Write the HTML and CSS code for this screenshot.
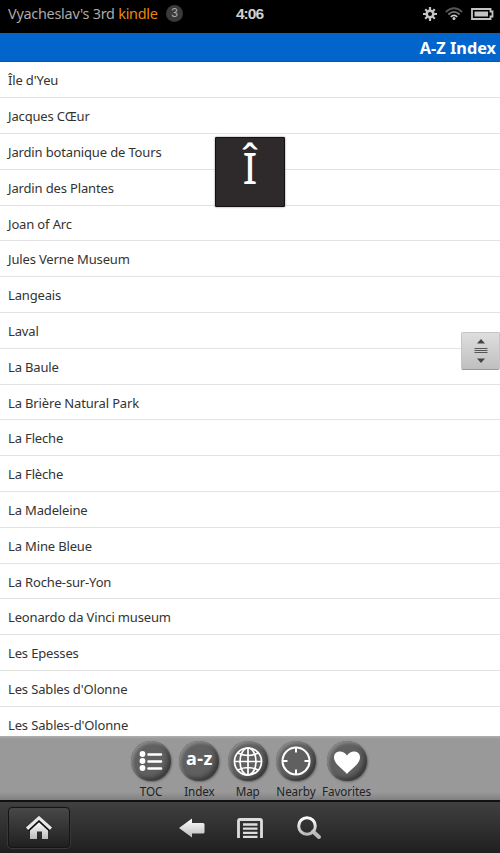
FILE: index.html
```
<!DOCTYPE html>
<html lang="en">
<head>
  <meta charset="UTF-8">
  <meta name="viewport" content="width=device-width, initial-scale=1.0">
  <title>A-Z Index</title>
  <link rel="stylesheet" href="styles.css">
</head>
<body>
  <div class="status-bar">
    <div class="device">Vyacheslav's 3rd <span class="brand">kindle</span></div>
    <div class="badge">3</div>
    <div class="clock">4:06</div>
    <div class="status-icons">
      <svg width="14" height="14" viewBox="0 0 14 14">
        <g stroke="#c4c4c4" stroke-width="2.2">
          <path d="M7 0v14M0 7h14M2.2 2.2l9.6 9.6M11.8 2.2l-9.6 9.6"/>
        </g>
        <circle cx="7" cy="7" r="3.3" fill="#000" stroke="#c4c4c4" stroke-width="2.6"/>
      </svg>
      <svg width="18" height="14" viewBox="0 0 18 14" fill="none" stroke-width="1.8">
        <path d="M.8 5Q9-2.4 17.2 5" stroke="#555"/>
        <path d="M3.4 7.5Q9 2.2 14.6 7.5" stroke="#777"/>
        <path d="M5.8 9.9Q9 6.7 12.2 9.9" stroke="#ccc"/>
        <circle cx="9" cy="11.6" r="1.5" fill="#ccc"/>
      </svg>
      <svg width="23" height="12" viewBox="0 0 23 12">
        <path d="M1 1h18.500v2.500h2v5h-2V11H1z" fill="none" stroke="#c4c4c4" stroke-width="1.8"/>
        <path d="M3.500 3.500h13.500v5H3.500z" fill="#c4c4c4"/>
      </svg>
    </div>
  </div>

  <div class="title-bar">A-Z Index</div>

  <div class="list-area">
    <ul class="list">
      <li>Île d'Yeu</li>
      <li>Jacques CŒur</li>
      <li>Jardin botanique de Tours</li>
      <li>Jardin des Plantes</li>
      <li>Joan of Arc</li>
      <li>Jules Verne Museum</li>
      <li>Langeais</li>
      <li>Laval</li>
      <li>La Baule</li>
      <li>La Brière Natural Park</li>
      <li>La Fleche</li>
      <li>La Flèche</li>
      <li>La Madeleine</li>
      <li>La Mine Bleue</li>
      <li>La Roche-sur-Yon</li>
      <li>Leonardo da Vinci museum</li>
      <li>Les Epesses</li>
      <li>Les Sables d'Olonne</li>
      <li>Les Sables-d'Olonne</li>
    </ul>
    <div class="letter">Î</div>
    <div class="scroll-thumb">
      <svg width="14" height="26" viewBox="0 0 14 26">
        <path d="M3 5.500L7 1l4 4.500z M3 20.500h8L7 25z" fill="#444"/>
        <path d="M.5 10.500h13M.5 12.500h13M.5 14.500h13" stroke="#555"/>
      </svg>
    </div>
  </div>

  <div class="tab-bar">
    <div class="tab">
      <div class="disc">
        <svg width="40" height="40" viewBox="0 0 40 40">
          <g fill="#fff"><circle cx="11.500" cy="13" r="2.900"/><circle cx="11.500" cy="20" r="2.900"/><circle cx="11.500" cy="27" r="2.900"/></g>
          <path d="M17.500 13.500h12.500M17.500 20.500h12.500M17.500 27.500h12.500" stroke="#fff" stroke-width="2.600" stroke-linecap="round"/>
        </svg>
      </div>
      <span>TOC</span>
    </div>
    <div class="tab">
      <div class="disc"><b>a-z</b></div>
      <span>Index</span>
    </div>
    <div class="tab">
      <div class="disc">
        <svg width="40" height="40" viewBox="0 0 40 40" fill="none" stroke="#fff" stroke-width="1.700">
          <circle cx="20" cy="20.500" r="13.500"/>
          <ellipse cx="20" cy="20.500" rx="8" ry="13.500"/>
          <path d="M20 7v27M6.500 20.500h27M10 12q10 5 20 0M10 29q10-5 20 0"/>
        </svg>
      </div>
      <span>Map</span>
    </div>
    <div class="tab">
      <div class="disc">
        <svg width="40" height="40" viewBox="0 0 40 40" fill="none" stroke="#fff" stroke-width="2">
          <circle cx="20" cy="20" r="13.500"/>
          <path d="M20 6.500v5M20 28.500v5M6.500 20h5M28.500 20h5"/>
        </svg>
      </div>
      <span>Nearby</span>
    </div>
    <div class="tab tab-wide">
      <div class="disc">
        <svg width="40" height="40" viewBox="0 0 40 40">
          <path d="M20 33C16 28 7 23 7 16.500C7 9.500 16 8.500 20 14.500C24 8.500 33 9.500 33 16.500C33 23 24 28 20 33z" fill="#fff"/>
        </svg>
      </div>
      <span>Favorites</span>
    </div>
  </div>

  <div class="nav-bar">
    <svg width="0" height="0" class="defs">
      <linearGradient id="silver" x1="0" y1="0" x2="0" y2="1">
        <stop offset="0" stop-color="#fff"/>
        <stop offset="1" stop-color="#bbb"/>
      </linearGradient>
    </svg>
    <div class="home">
      <svg width="28" height="26" viewBox="0 0 28 26">
        <path d="M5 14L14 6.500 23 14V24H17V16.500H12V24H5z" fill="url(#silver)"/>
        <path d="M2.500 14.500L14 3.800 25.500 14.500" fill="none" stroke="#111" stroke-width="5"/>
        <path d="M2 13.800L14 2.800 26 13.800" fill="none" stroke="#e8e8e8" stroke-width="3.200"/>
      </svg>
    </div>
    <svg class="back" width="26" height="20" viewBox="0 0 26 20">
      <path d="M0 10L13 .5V5H24q1.500 0 1.500 1.500V14q0 1.500-1.500 1.500H13V19.500z" fill="url(#silver)"/>
    </svg>
    <svg class="menu" width="26" height="20" viewBox="0 0 26 20" fill="none">
      <path d="M1.500 20V3q0-1.500 1.500-1.500H23q1.500 0 1.500 1.500V20" stroke="#ddd" stroke-width="2.800"/>
      <path d="M6 6.500H20.500M6 10.700H20.500M6 14.900H20.500M6 19H20.500" stroke="#ddd" stroke-width="2.300"/>
    </svg>
    <svg class="search" width="25" height="24" viewBox="0 0 25 24" fill="none">
      <path d="M16 15.500L22 21" stroke="#bbb" stroke-width="4" stroke-linecap="round"/>
      <circle cx="10" cy="10" r="8.300" stroke="url(#silver)" stroke-width="3"/>
    </svg>
  </div>
</body>
</html>
```
FILE: styles.css
```
* {
  box-sizing: border-box;
}

body {
  margin: 0;
  height: 853px;
  display: flex;
  flex-direction: column;
  overflow: hidden;
  font-family: "Noto Sans", "Open Sans", sans-serif;
  background: #fff;
}

svg {
  display: block;
}

.status-bar {
  flex: none;
  height: 33px;
  display: flex;
  align-items: center;
  padding: 0 6px 6px 8px;
  background: #000;
  color: #aaa;
}

.device {
  width: 158px;
  font-size: 14.4px;
  letter-spacing: -0.25px;
  line-height: 20px;
  white-space: nowrap;
}

.brand {
  color: #e8890c;
}

.badge {
  width: 17px;
  height: 17px;
  border-radius: 50%;
  background: #3a3a3a;
  font: 12px/17px "Liberation Sans", sans-serif;
  text-align: center;
}

.clock {
  margin-left: 53px;
  font: bold 15.5px/20px "Liberation Sans", sans-serif;
  letter-spacing: -1px;
  color: #d0d0d0;
}

.status-icons {
  margin-left: auto;
  display: flex;
  align-items: center;
  gap: 8px;
}

.title-bar {
  flex: none;
  height: 29px;
  padding-right: 4px;
  background: #0265cc;
  border-bottom: 1px solid #0058bd;
  color: #fff;
  font-size: 16.3px;
  font-weight: bold;
  line-height: 30px;
  text-align: right;
}

.list-area {
  position: relative;
  flex: none;
  height: 674px;
  overflow: hidden;
}

.list {
  margin: 0;
  padding: 0.3px 0 0;
  list-style: none;
}

.list li {
  height: 35.82px;
  padding-left: 8px;
  border-bottom: 1px solid #e2e2e2;
  color: #333;
  font-size: 13px;
  letter-spacing: -0.15px;
  line-height: 36px;
}

.letter {
  position: absolute;
  left: 215px;
  top: 75px;
  width: 70px;
  height: 70px;
  border: 1px solid #111;
  border-radius: 1px;
  background: #2e2a2b;
  box-shadow: 0 0 2px #777;
  color: #fff;
  font-size: 44px;
  line-height: 59px;
  text-align: center;
}

.scroll-thumb {
  position: absolute;
  right: 0;
  top: 270px;
  width: 39px;
  height: 38px;
  display: flex;
  align-items: center;
  justify-content: center;
  border: 1px solid #c5c5c5;
  border-bottom-color: #999;
  border-radius: 2px;
  background: linear-gradient(#dedede, #bfbfbf);
}

.tab-bar {
  flex: none;
  height: 64px;
  display: flex;
  justify-content: center;
  padding-top: 5px;
  background: linear-gradient(#b0b0b0, #999 3px, #999 56px, #808080);
}

.tab {
  width: 48.3px;
  display: flex;
  flex-direction: column;
  align-items: center;
  color: #222;
  font-size: 11.7px;
  letter-spacing: -0.1px;
  line-height: 18px;
  white-space: nowrap;
}

.tab-wide {
  width: 53px;
}

.disc {
  width: 40px;
  height: 40px;
  margin-bottom: 1px;
  border-radius: 50%;
  background: #606060;
  box-shadow: inset 2px 2px 3px #888, inset -3px -3px 4px #3a3a3a, 1px 1px 2px #666;
  color: #fff;
  font-size: 18px;
  letter-spacing: 0.5px;
  line-height: 35px;
  text-align: center;
}

.nav-bar {
  position: relative;
  flex: none;
  height: 53px;
  display: flex;
  align-items: center;
  padding-left: 8px;
  border-top: 2px solid #111;
  background: linear-gradient(#404040, #1f1f1f);
}

.defs {
  position: absolute;
}

.home {
  width: 62px;
  height: 41px;
  display: flex;
  align-items: center;
  justify-content: center;
  border: 1px solid #151515;
  border-radius: 4px;
  background: linear-gradient(#484848, #202020);
  box-shadow: 0 0 0 1px #383838;
}

.back {
  margin-left: 109px;
}

.menu {
  margin-left: 32px;
}

.search {
  margin-left: 34px;
}
```
